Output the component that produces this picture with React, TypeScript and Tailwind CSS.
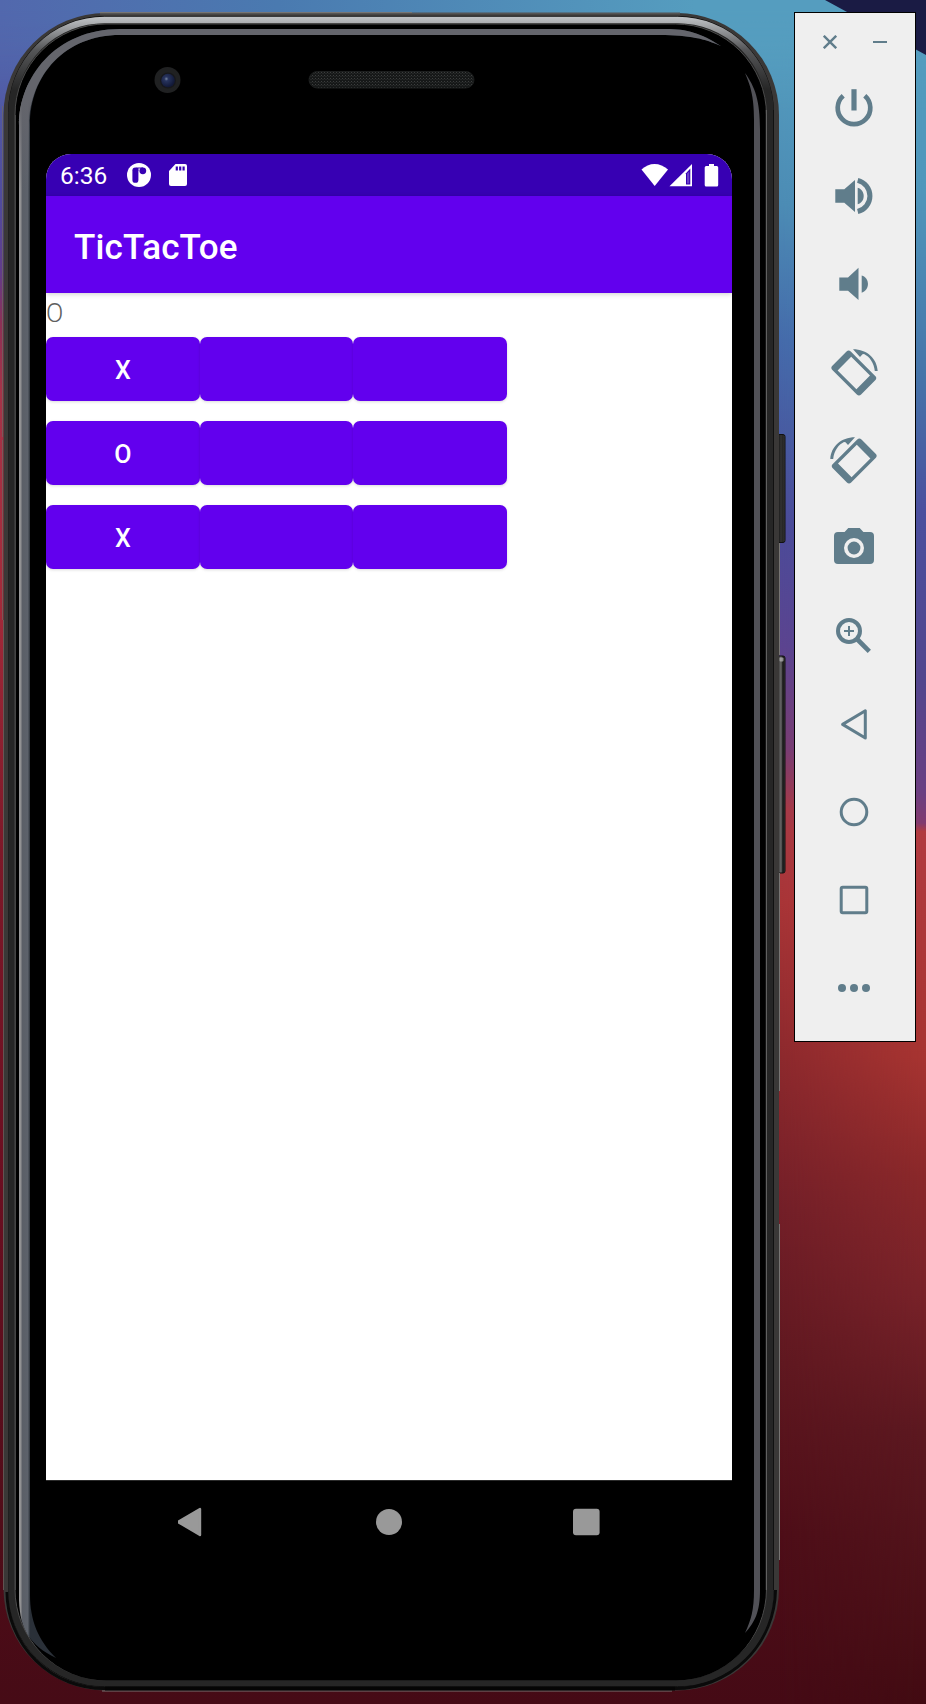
import type { ReactNode } from "react";

function Wallpaper() {
  return (
    <svg className="absolute inset-0" width="926" height="1704" viewBox="0 0 926 1704" aria-hidden="true">
      <defs>
        <linearGradient id="sky" x1="0" x2="1" y1="0" y2="0">
          <stop offset="0" stopColor="#5268ad" />
          <stop offset="0.3" stopColor="#4a7ab0" />
          <stop offset="0.75" stopColor="#559dbf" />
          <stop offset="1" stopColor="#559dbf" />
        </linearGradient>
        <linearGradient id="left" gradientUnits="userSpaceOnUse" x1="0" x2="0" y1="0" y2="1704">
          <stop offset="0" stopColor="#5268ad" />
          <stop offset="0.12" stopColor="#504a9c" />
          <stop offset="0.16" stopColor="#623c8a" />
          <stop offset="0.19" stopColor="#8c3055" />
          <stop offset="0.23" stopColor="#a53348" />
          <stop offset="0.35" stopColor="#a32a3a" />
          <stop offset="0.5" stopColor="#7d1828" />
          <stop offset="0.7" stopColor="#6a0e20" />
          <stop offset="0.9" stopColor="#4f0c18" />
          <stop offset="1" stopColor="#460b16" />
        </linearGradient>
        <linearGradient id="middle" gradientUnits="userSpaceOnUse" x1="0" x2="0" y1="0" y2="1704">
          <stop offset="0.02" stopColor="#559dbf" />
          <stop offset="0.12" stopColor="#4c8cb5" />
          <stop offset="0.2" stopColor="#456bab" />
          <stop offset="0.31" stopColor="#4b4b99" />
          <stop offset="0.38" stopColor="#5c4490" />
          <stop offset="0.44" stopColor="#7b3d72" />
          <stop offset="0.475" stopColor="#a93a45" />
          <stop offset="0.53" stopColor="#a93537" />
          <stop offset="0.62" stopColor="#8d292d" />
          <stop offset="0.71" stopColor="#731f28" />
          <stop offset="0.8" stopColor="#601820" />
          <stop offset="0.9" stopColor="#4e0e18" />
          <stop offset="1" stopColor="#450a15" />
        </linearGradient>
        <linearGradient id="right" gradientUnits="userSpaceOnUse" x1="926" x2="916" y1="0" y2="1704">
          <stop offset="0" stopColor="#559dbf" />
          <stop offset="0.11" stopColor="#5097bb" />
          <stop offset="0.22" stopColor="#4675a9" />
          <stop offset="0.3" stopColor="#4b509e" />
          <stop offset="0.4" stopColor="#52468d" />
          <stop offset="0.465" stopColor="#693f83" />
          <stop offset="0.483" stopColor="#803a70" />
          <stop offset="0.488" stopColor="#b13b40" />
          <stop offset="0.62" stopColor="#a73431" />
          <stop offset="0.69" stopColor="#8a282a" />
          <stop offset="0.76" stopColor="#782229" />
          <stop offset="0.84" stopColor="#5c1820" />
          <stop offset="1" stopColor="#420b12" />
        </linearGradient>
        <linearGradient id="blend" gradientUnits="userSpaceOnUse" x1="780" x2="926" y1="0" y2="0">
          <stop offset="0" stopColor="#000" />
          <stop offset="1" stopColor="#fff" />
        </linearGradient>
        <linearGradient id="fadeDown" gradientUnits="userSpaceOnUse" x1="0" x2="0" y1="10" y2="110">
          <stop offset="0" stopColor="#fff" />
          <stop offset="1" stopColor="#000" />
        </linearGradient>
        <mask id="toRight">
          <rect x="780" width="146" height="1704" fill="url(#blend)" />
        </mask>
        <mask id="toBottom">
          <rect width="926" height="110" fill="url(#fadeDown)" />
        </mask>
      </defs>
      <rect width="926" height="1704" fill="url(#middle)" />
      <rect x="780" width="146" height="1704" fill="url(#right)" mask="url(#toRight)" />
      <rect width="400" height="1704" fill="url(#left)" />
      <rect width="926" height="110" fill="url(#sky)" mask="url(#toBottom)" />
      <path d="M825 0H926V55L915 49Z" fill="#1a1b44" />
    </svg>
  );
}

function PhoneBody() {
  return (
    <svg className="absolute inset-0" width="790" height="1704" viewBox="0 0 790 1704" aria-hidden="true">
      <defs>
        <linearGradient id="band" gradientUnits="userSpaceOnUse" x1="0" x2="0" y1="17" y2="90">
          <stop offset="0" stopColor="#c0c3c6" />
          <stop offset="0.12" stopColor="#a4a6a9" />
          <stop offset="0.45" stopColor="#555658" />
          <stop offset="1" stopColor="#262626" />
        </linearGradient>
        <linearGradient id="rimLeft" gradientUnits="userSpaceOnUse" x1="19" x2="30" y1="0" y2="0">
          <stop offset="0" stopColor="#9b9b9b" />
          <stop offset="0.18" stopColor="#8e8e90" />
          <stop offset="0.28" stopColor="#5b5f67" />
          <stop offset="0.8" stopColor="#5d626b" />
          <stop offset="1" stopColor="#2a3038" />
        </linearGradient>
        <linearGradient id="rimTop" gradientUnits="userSpaceOnUse" x1="0" x2="0" y1="100" y2="190">
          <stop offset="0" stopColor="#64656c" />
          <stop offset="1" stopColor="#64656c" stopOpacity="0" />
        </linearGradient>
        <linearGradient id="key" x1="0" x2="1" y1="0" y2="0">
          <stop offset="0" stopColor="#080808" />
          <stop offset="0.5" stopColor="#333" />
          <stop offset="0.75" stopColor="#232323" />
          <stop offset="1" stopColor="#444" />
        </linearGradient>
        <linearGradient id="keyBright" x1="0" x2="1" y1="0" y2="0">
          <stop offset="0" stopColor="#0a0a0a" />
          <stop offset="0.3" stopColor="#4c4c4c" />
          <stop offset="0.5" stopColor="#686868" />
          <stop offset="0.75" stopColor="#111" />
          <stop offset="1" stopColor="#444" />
        </linearGradient>
        <radialGradient id="lens" cx="0.38" cy="0.38" r="0.6">
          <stop offset="0" stopColor="#75849f" />
          <stop offset="0.25" stopColor="#28345e" />
          <stop offset="1" stopColor="#121938" />
        </radialGradient>
        <pattern id="mesh" width="3" height="3" patternUnits="userSpaceOnUse">
          <rect width="3" height="3" fill="#161818" />
          <rect width="1" height="1" fill="#3c3e3e" />
          <rect x="1" y="1" width="2" height="1" fill="#242626" />
        </pattern>
      </defs>
      <rect x="777" y="434.5" width="8" height="108" rx="2" fill="url(#key)" stroke="#111" />
      <rect x="777" y="656" width="8" height="217" rx="2" fill="url(#keyBright)" stroke="#111" />
      <rect x="779.5" y="657.5" width="4" height="4" rx="1" fill="#bbb" opacity="0.7" />
      <rect x="3.5" y="13" width="775.5" height="1677.5" rx="102" fill="#3a3837" />
      <path d="M100 13.5H680" stroke="#555" strokeWidth="2" />
      <path d="M2.5 106V437M2.5 440V620M3.5 620V1590" stroke="#6c6863" fill="none" opacity="0.7" />
      <path d="M100 12.5H412M779.5 543V655M779.5 873V1091M779.5 1224V1560M102 1691H672" stroke="#777573" fill="none" />
      <rect x="8.5" y="16.5" width="765" height="1670" rx="96" fill="#242424" stroke="#0c0c0c" />
      <path d="M105 1688.5H675" stroke="#050505" strokeWidth="4" />
      <path d="M7 1592A97 97 0 0 0 105 1688.5M675 1688.5A100 100 0 0 0 775.5 1590" stroke="#0a0a0a" strokeWidth="3" fill="none" />
      <rect x="11.5" y="20" width="759" height="1663" rx="93" fill="none" stroke="url(#band)" strokeWidth="6.5" />
      <rect x="15" y="24" width="751.5" height="1656" rx="91" fill="#000" stroke="#4b4b4b" />
      <rect x="17" y="26" width="748" height="1654.5" rx="89" fill="#000" />
      <path d="M721 46C700 33 688 29 665 29H120C55 29 19 78 19 125V1600C20 1630 30 1645 56 1658C38 1640 30 1620 30 1595V125C30 75 65 35 120 35H660C690 35 705 39 721 46Z" fill="url(#rimLeft)" />
      <path d="M665 29H120C55 29 19 78 19 125V190H29V125C30 75 65 35 120 35H660C690 35 705 39 721 46C700 33 688 29 665 29Z" fill="url(#rimTop)" />
      <path d="M745 73C755 87 760 100 760 130V1590C760 1612 755 1622 745 1633C751 1620 754 1610 754 1590V120C754 95 750 85 745 73Z" fill="#515157" />
      <path d="M15.5 115V1590" stroke="#444" />
      <path d="M766.3 110V1590" stroke="#666" />
      <path d="M773.5 110V1590" stroke="#111" />
      <circle cx="167.5" cy="80" r="13" fill="#202122" />
      <circle cx="168" cy="80.5" r="8" fill="#17181b" />
      <circle cx="168" cy="80.5" r="6.8" fill="url(#lens)" />
      <rect x="309" y="71.5" width="165" height="16.5" rx="8.2" fill="url(#mesh)" stroke="#1c1e1e" />
    </svg>
  );
}

function StatusBar() {
  return (
    <div className="flex h-[42px] shrink-0 items-center bg-[#3700b3] pl-[14px] text-white">
      <span className="w-[67px] pt-0.5 text-[24.5px] leading-none">6:36</span>
      <svg width="24" height="24" viewBox="0 0 24 24">
        <circle cx="12" cy="12" r="12" fill="#fff" />
        <rect x="5.4" y="4.4" width="6" height="15.4" rx="2.9" fill="#3700b3" />
        <path d="M9 4.4H16V5.4H11.4V8Z" fill="#3700b3" />
        <circle cx="15.8" cy="7.8" r="3.4" fill="#3700b3" />
      </svg>
      <svg className="ml-[17px]" width="20" height="22" viewBox="0 0 20 22">
        <path d="M7.5 0H17A2 2 0 0 1 19 2V20A2 2 0 0 1 17 22H3A2 2 0 0 1 1 20V7Z" fill="#fff" />
        <path d="M8.8 2.5V6.5M12.2 2.5V6.5M15.6 2.5V6.5" stroke="#3700b3" strokeWidth="2.2" />
      </svg>
      <svg className="ml-auto mr-[13px]" width="78" height="24" viewBox="0 0 78 24">
        <path d="M0.5 6.5C8 -1 19 -1 27 6.5L13.7 23Z" fill="#fff" />
        <path d="M51 1V23.3H28.5Z" fill="#fff" />
        <path d="M45 10.2L49.3 5.6V21.6H45Z" fill="#3700b3" />
        <path d="M46 10.5L48.2 8.4V20.6H46Z" fill="#fff" opacity="0.25" />
        <path d="M68 1H73V3H75.7A1.5 1.5 0 0 1 77.2 4.5V22A1.5 1.5 0 0 1 75.7 23.5H65.2A1.5 1.5 0 0 1 63.7 22V4.5A1.5 1.5 0 0 1 65.2 3H68Z" fill="#fff" />
      </svg>
    </div>
  );
}

const board = [
  ["X", "", ""],
  ["O", "", ""],
  ["X", "", ""],
];

function Screen() {
  return (
    <div className="flex h-[1326px] w-[686px] flex-col overflow-hidden rounded-t-[25px] bg-white">
      <StatusBar />
      <header className="z-10 flex h-[97px] shrink-0 items-center bg-[#6200ee] pl-7 pt-1.5 text-[35px] font-medium leading-none tracking-[0.15px] text-white shadow-[0_1px_5px_rgba(0,0,0,0.2)]">
        TicTacToe
      </header>
      <div className="h-11 pt-1.5 text-[25.5px] font-light leading-[28px] text-[#606060]">O</div>
      <div className="flex flex-col gap-5">
        {board.map((row, r) => (
          <div key={r} className="flex">
            {row.map((mark, c) => (
              <button
                key={c}
                aria-label={`Row ${r + 1}, column ${c + 1}`}
                className="h-16 w-[153.7px] rounded-[7px] bg-[#6200ee] pt-[3px] text-[25px] font-medium text-white shadow-[0_1px_3px_rgba(0,0,0,0.15)]"
              >
                {mark}
              </button>
            ))}
          </div>
        ))}
      </div>
    </div>
  );
}

function NavBar() {
  return (
    <nav className="flex h-[84px] w-[686px] items-center justify-center gap-[169px] border-t border-[#2b2b2b] bg-black pb-0.5 text-[#999]">
      <svg width="28" height="30" viewBox="3 0 28 30">
        <path d="M3 15L25 2V28Z" fill="currentColor" stroke="currentColor" strokeWidth="2.4" strokeLinejoin="round" />
      </svg>
      <svg width="28" height="28" viewBox="0 0 28 28">
        <circle cx="14" cy="14" r="13" fill="currentColor" />
      </svg>
      <svg width="28" height="28" viewBox="0 0 28 28">
        <rect x="1" y="0.7" width="26.6" height="26.6" rx="3" fill="currentColor" />
      </svg>
    </nav>
  );
}

function Glyph({ children }: { children: ReactNode }) {
  return (
    <button className="block size-12">
      <svg width="48" height="48" viewBox="0 0 48 48" fill="currentColor" className="overflow-visible">
        {children}
      </svg>
    </button>
  );
}

function RotateShape() {
  return (
    <>
      <g transform="translate(23.8 25) rotate(45)">
        <path
          fillRule="evenodd"
          d="M-17.3 -13H17.3A3 3 0 0 1 20.3 -10V10A3 3 0 0 1 17.3 13H-17.3A3 3 0 0 1 -20.3 10V-10A3 3 0 0 1 -17.3 -13ZM-13.3 -9.6V9.6H13.3V-9.6Z"
        />
      </g>
      <path d="M23 1.2C37 1.2 47 10.5 47.7 23H44.8C44 14.8 39.5 8.6 34 6L32.5 6.2L30 9Z" />
    </>
  );
}

function Toolbar() {
  return (
    <aside className="relative mt-3 flex h-[1030px] w-[122px] flex-col items-center border border-black bg-[#efefef] text-[#607d8b]">
      <div className="flex h-[71px] w-full justify-between px-7 pt-[22px]">
        <svg width="14" height="14" viewBox="0 0 14 14" stroke="currentColor" strokeWidth="2.4">
          <path d="M0.8 0.8L13.2 13.2M13.2 0.8L0.8 13.2" />
        </svg>
        <svg width="14" height="14" viewBox="0 0 14 14" stroke="currentColor" strokeWidth="2">
          <path d="M0 7H14" />
        </svg>
      </div>
      <div className="flex flex-col gap-10 pr-0.5">
        <Glyph>
          <path d="M34.8 11.7A16.3 16.3 0 1 1 13.2 11.7" fill="none" stroke="currentColor" strokeWidth="4.7" />
          <path d="M21.4 5.2H26.6V26.5H21.4Z" />
        </Glyph>
        <Glyph>
          <path d="M5.3 17.3H14.3L25 8V40L14.3 30.7H5.3Z" />
          <path d="M27.7 15.7C35.7 18 35.7 30 27.7 32.2Z" />
          <path d="M27.7 8.4A16 16 0 0 1 27.7 39.5" fill="none" stroke="currentColor" strokeWidth="5" />
        </Glyph>
        <Glyph>
          <path d="M9.3 17.5H18L28.5 7.7V40L18 30.7H9.3Z" />
          <path d="M31.7 15.5C40 18 40 30 31.7 32.7Z" />
        </Glyph>
        <Glyph>
          <RotateShape />
        </Glyph>
        <Glyph>
          <g transform="matrix(-1 0 0 1 48 0)">
            <RotateShape />
          </g>
        </Glyph>
        <Glyph>
          <path
            fillRule="evenodd"
            d="M18.3 4H29.7L33.4 8H40A4 4 0 0 1 44 12V36A4 4 0 0 1 40 40H8A4 4 0 0 1 4 36V12A4 4 0 0 1 8 8H14.6ZM24 14A10 10 0 1 0 24 34A10 10 0 1 0 24 14Z"
          />
          <circle cx="24" cy="24" r="6.4" />
        </Glyph>
        <Glyph>
          <circle cx="19" cy="19" r="11" fill="none" stroke="currentColor" strokeWidth="4" />
          <path d="M27.5 27.5L39.3 39.3" stroke="currentColor" strokeWidth="4.6" />
          <path d="M14 19H24M19 14V24" stroke="currentColor" strokeWidth="2" />
        </Glyph>
        <Glyph>
          <path d="M35.3 10.8V38L12.6 24.4Z" fill="none" stroke="currentColor" strokeWidth="3" strokeLinejoin="round" />
        </Glyph>
        <Glyph>
          <circle cx="24" cy="24" r="12.8" fill="none" stroke="currentColor" strokeWidth="3" />
        </Glyph>
        <Glyph>
          <rect x="11.2" y="11.2" width="25.6" height="25.6" rx="1.5" fill="none" stroke="currentColor" strokeWidth="3" />
        </Glyph>
        <Glyph>
          <circle cx="12" cy="24" r="4" />
          <circle cx="24" cy="24" r="4" />
          <circle cx="36" cy="24" r="4" />
        </Glyph>
      </div>
    </aside>
  );
}

export default function App() {
  return (
    <main className="relative flex h-[1704px] w-[926px] items-start overflow-hidden bg-[#480b17] font-['Roboto',sans-serif]">
      <Wallpaper />
      <PhoneBody />
      <section className="relative w-[794px] pl-[46px] pt-[154px]">
        <Screen />
        <NavBar />
      </section>
      <Toolbar />
    </main>
  );
}
